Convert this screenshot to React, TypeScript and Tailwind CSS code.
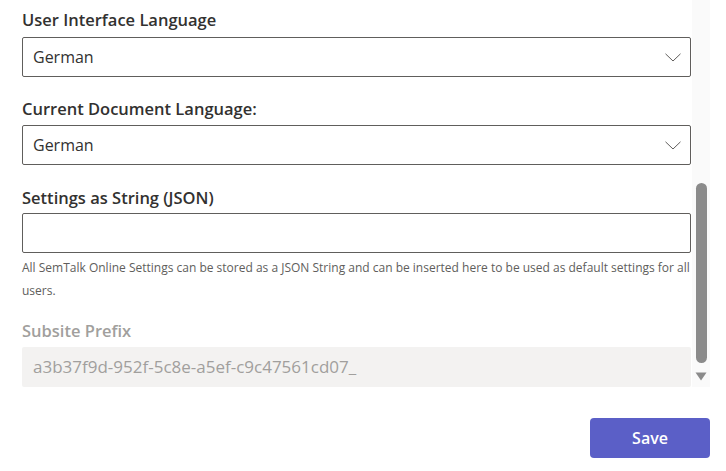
import React from 'react';

const font = { fontFamily: '"Open Sans", "Noto Sans", sans-serif' };

const Chevron = () => (
    <svg width="16" height="9" viewBox="0 0 16 9" fill="none" className="shrink-0">
        <path d="M0.5 0.8 L8 8 L15.5 0.8" stroke="#605e5c" strokeWidth="1" />
    </svg>
);

const Dropdown = ({ value }: { value: string }) => (
    <div className="h-[40px] flex items-center justify-between border border-[#605e5c] rounded-[2px] pl-[10px] pr-[9px] bg-white">
        <span className="text-[16px] text-[#323130]">{value}</span>
        <Chevron />
    </div>
);

const App = () => {
    return (
        <div className="w-[726px] h-[471px] bg-white overflow-hidden" style={font}>
            {/* Scrolled settings panel */}
            <div className="flex h-[387px] w-[710px]">
                <div className="w-[692px] pl-[22px] pr-[1px]">
                    <label className="block mt-[9px] mb-[6px] text-[16.5px] leading-[22px] font-semibold text-[#323130]">
                        User Interface Language
                    </label>
                    <Dropdown value="German" />

                    <label className="block mt-[21px] mb-[5px] text-[16.5px] leading-[22px] font-semibold text-[#323130]">
                        Current Document Language:
                    </label>
                    <Dropdown value="German" />

                    <label className="block mt-[22px] mb-[4px] text-[16.5px] leading-[22px] font-semibold text-[#323130]">
                        Settings as String (JSON)
                    </label>
                    <div className="h-[40px] border border-[#605e5c] rounded-[2px] bg-white" />
                    <p className="mt-[3px] text-[12px] leading-[23px] text-[#605e5c] whitespace-nowrap">
                        All SemTalk Online Settings can be stored as a JSON String and can be inserted here to be used as default settings for all
                        <br />
                        users.
                    </p>

                    <label className="block mt-[18px] mb-[5px] text-[16.5px] leading-[22px] font-semibold text-[#a19f9d]">
                        Subsite Prefix
                    </label>
                    <div className="h-[40px] flex items-center px-[11px] rounded-[2px] bg-[#f3f2f1] text-[17px] text-[#a19f9d]">
                        a3b37f9d-952f-5c8e-a5ef-c9c47561cd07_
                    </div>
                </div>

                {/* Scrollbar */}
                <div className="w-[18px] h-full bg-[#fafafa] flex flex-col items-center">
                    <div className="mt-[183px] w-[11px] h-[180px] rounded-full bg-[#8b8b8b]" />
                    <svg width="12" height="9" viewBox="0 0 12 9" className="mt-[9px]">
                        <path d="M0.5 0.5 H11.5 L6 8.5 Z" fill="#8b8b8b" />
                    </svg>
                </div>
            </div>

            {/* Footer */}
            <div className="flex justify-end w-[710px] mt-[31px]">
                <button className="w-[120px] h-[40px] rounded-[4px] bg-[#5b5fc7] text-white text-[16px] font-semibold">
                    Save
                </button>
            </div>
        </div>
    );
};

export default App;
